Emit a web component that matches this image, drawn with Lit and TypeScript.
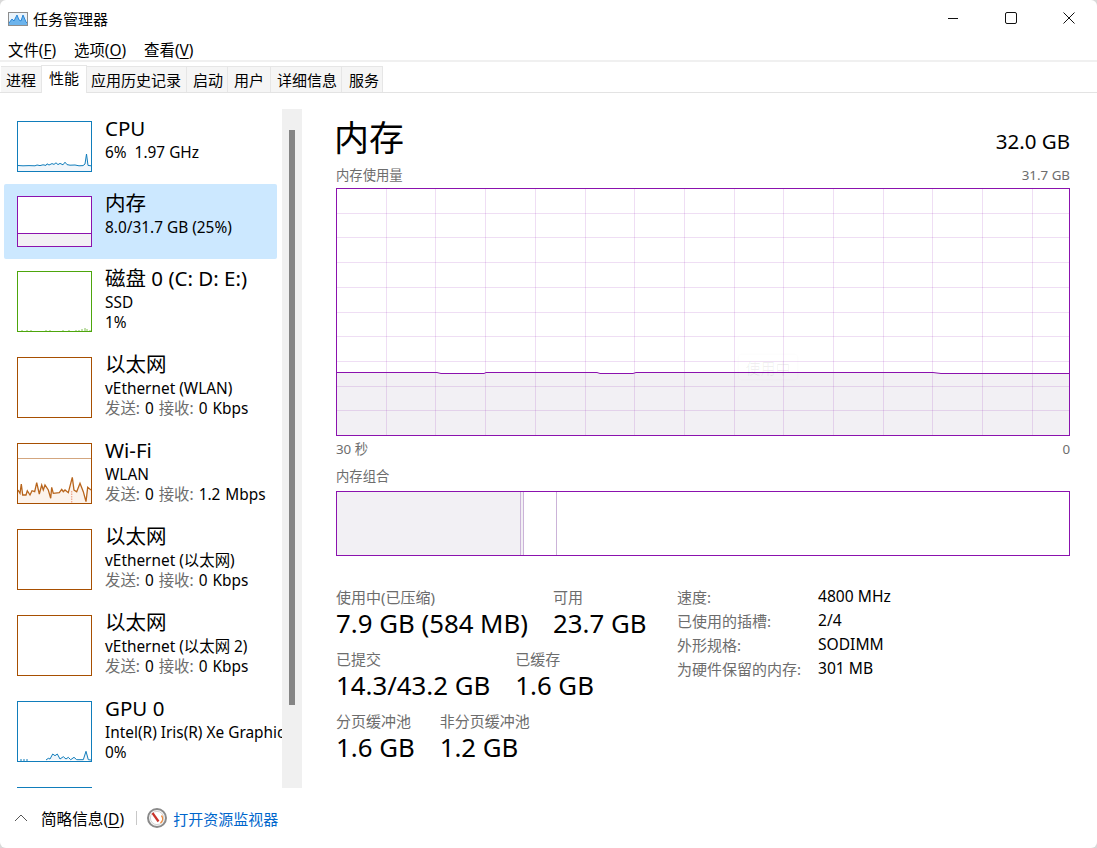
import { LitElement, html, svg, css } from 'lit';
import { customElement } from 'lit/decorators.js';

type Kind = 'cpu' | 'mem' | 'disk' | 'net';

interface Item {
  kind: Kind;
  title: string;
  lines: string[];
  rate?: string;
  tall: boolean;
  chart?: 'cpu' | 'mem' | 'disk' | 'wifi' | 'gpu';
}

const ITEMS: Item[] = [
  { kind: 'cpu', title: 'CPU', lines: ['6%\u00a0 1.97 GHz'], tall: false, chart: 'cpu' },
  { kind: 'mem', title: '内存', lines: ['8.0/31.7 GB (25%)'], tall: false, chart: 'mem' },
  { kind: 'disk', title: '磁盘 0 (C: D: E:)', lines: ['SSD', '1%'], tall: true, chart: 'disk' },
  { kind: 'net', title: '以太网', lines: ['vEthernet (WLAN)'], rate: '0 Kbps', tall: true },
  { kind: 'net', title: 'Wi-Fi', lines: ['WLAN'], rate: '1.2 Mbps', tall: true, chart: 'wifi' },
  { kind: 'net', title: '以太网', lines: ['vEthernet (以太网)'], rate: '0 Kbps', tall: true },
  { kind: 'net', title: '以太网', lines: ['vEthernet (以太网 2)'], rate: '0 Kbps', tall: true },
  { kind: 'cpu', title: 'GPU 0', lines: ['Intel(R) Iris(R) Xe Graphics', '0%'], tall: true, chart: 'gpu' },
  { kind: 'cpu', title: 'GPU 1', lines: [], tall: true },
];

const WIFI =
  '1,47 3,50.3 4.3,41 5.7,52 9,52 10.3,47.7 13,52 15,47.7 17.7,48.7 19.7,39.7 22.3,51 24.7,42 26.3,47 28,42 31.3,47 33.7,55.3 34.7,44.3 36.3,50.3 42.3,49.7 44.7,46.3 46.3,48.7 48,47 51.3,49.7 55.3,34.3 57,47 59.7,48.7 63,40.3 66.3,48.7 69,58.7 70.7,44.3 74,47';
const CPU =
  '1,44.5 6,44.8 12,44.6 18,44.8 20,44 23,44.6 26,43.8 29,44.4 30,42.8 32,44 35,42.6 37,43.4 39,41.8 41,43.6 43,42.4 46,43.8 48,41.2 50,43.6 53,44.2 58,44 62,44.8 66,44.6 68,43 69.5,33 71,44.4 74,44.8';
const GPU =
  '29,59 31.3,57.3 33,58 35.7,53 38,54.7 40.3,53 43,58 46.3,55.7 49,58 51.3,56.3 53.7,58.7 57,56.3 59.7,58.7 66.3,58.7 69,50.3 71.3,58.7 74,59';

const MEM_LINE =
  '0,183.5 100,183.5 104,184.5 147,184.5 149,183.5 260,183.5 263,184.5 296,184.5 299,183.5 596,183.5 604,184.5 733,184.5';

@customElement('app-root')
export class AppRoot extends LitElement {
  static override styles = css`
    :host {
      display: block;
      width: 1097px;
      height: 848px;
      background: #d9d9d9;
      font-family: 'Noto Sans', 'Noto Sans CJK SC', sans-serif;
      color: #000;
      --purple: #8b12ae;
      --muted: #6d6d6d;
    }
    .window {
      width: 1097px;
      height: 848px;
      background: #fff;
      border-radius: 6px;
      overflow: hidden;
      display: flex;
      flex-direction: column;
      font-size: 15.4px;
    }

    /* title bar */
    .titlebar {
      height: 35px;
      box-sizing: border-box;
      display: flex;
      align-items: center;
      padding: 2px 0 0 8px;
      flex: none;
    }
    .titlebar .app-icon {
      margin-right: 5px;
    }
    .caption {
      font-size: 15px;
    }
    .win-btns {
      margin: -2px -1px 0 auto;
      display: flex;
    }
    .win-btn {
      width: 58px;
      height: 32px;
      display: flex;
      align-items: center;
      justify-content: center;
    }

    /* menu + tabs */
    .menu {
      height: 27px;
      flex: none;
      display: flex;
      align-items: center;
      gap: 18px;
      padding: 4px 0 0 8px;
      box-sizing: border-box;
      border-bottom: 2px solid #f0f0f0;
    }
    u {
      text-underline-offset: 2px;
    }
    .tabs {
      height: 31px;
      flex: none;
      box-sizing: border-box;
      display: flex;
      align-items: flex-end;
      padding-left: 1px;
      border-bottom: 1px solid #e3e3e3;
    }
    .tab {
      height: 26px;
      box-sizing: border-box;
      padding: 0 5px 1px;
      background: #f5f5f5;
      border: 1px solid #e6e6e6;
      border-width: 1px 1px 0 0;
      display: flex;
      align-items: center;
      font-size: 15px;
      white-space: nowrap;
    }
    .tab.active {
      height: 28px;
      margin-bottom: -1px;
      padding: 0 7px 4px;
      background: #fff;
      border-width: 1px 1px 0 1px;
      margin-left: -1px;
    }
    .tab:nth-child(3) {
      padding-left: 4px;
    }
    .tab:nth-child(4) {
      padding-left: 6px;
      padding-right: 4px;
    }
    .tab:nth-child(5) {
      padding-left: 6px;
      padding-right: 6px;
    }
    .tab:nth-child(6) {
      padding-left: 6px;
      padding-right: 4px;
    }
    .tab:nth-child(7) {
      padding-left: 7px;
      padding-right: 3px;
    }

    /* body */
    .body {
      flex: 1;
      min-height: 0;
      display: flex;
    }
    .sidebar {
      width: 302px;
      flex: none;
      box-sizing: border-box;
      padding-top: 16px;
      display: flex;
    }
    .list {
      width: 282px;
      height: 679px;
      overflow: hidden;
      flex: none;
    }
    .track {
      width: 20px;
      height: 679px;
      background: #f0f0f0;
      box-sizing: border-box;
      padding: 21px 7px 0;
      flex: none;
    }
    .thumb-bar {
      height: 575px;
      background: #858585;
    }
    .item {
      height: 86px;
      margin: 0 5px 0 4px;
      padding-left: 13px;
      display: flex;
      gap: 13px;
      box-sizing: border-box;
      border-radius: 2px;
    }
    .item.short {
      height: 75px;
    }
    .item.selected {
      background: #cce8ff;
    }
    .thumb {
      width: 75px;
      height: 61px;
      margin-top: 12px;
      box-sizing: border-box;
      border: 1px solid;
      flex: none;
      background: #fff;
    }
    .short .thumb {
      height: 51px;
    }
    .thumb svg {
      display: block;
      width: 73px;
      height: 100%;
    }
    .thumb.cpu {
      border-color: #117dbb;
    }
    .thumb.mem {
      border-color: var(--purple);
    }
    .thumb.disk {
      border-color: #4da60c;
    }
    .thumb.net {
      border-color: #a74f01;
    }
    .info {
      padding-top: 7px;
      white-space: nowrap;
      min-width: 0;
    }
    .name {
      font-size: 20.5px;
      line-height: 24px;
      margin-bottom: 3px;
    }
    .line {
      line-height: 20px;
    }
    .line.rate {
      word-spacing: 1px;
    }
    .line .dim {
      color: var(--muted);
    }

    /* main panel */
    .main {
      flex: 1;
      min-width: 0;
      box-sizing: border-box;
      padding: 24px 27px 0 34px;
    }
    .head {
      height: 44px;
      display: flex;
      justify-content: space-between;
      align-items: center;
    }
    .head h1 {
      margin: 0 0 2px -2px;
      font-size: 35px;
      font-weight: 400;
      line-height: 44px;
    }
    .total {
      font-size: 20.5px;
      padding-top: 4px;
    }
    .cap {
      height: 18px;
      line-height: 18px;
      font-size: 13.33px;
      color: var(--muted);
      display: flex;
      justify-content: space-between;
    }
    .cap.first {
      margin-top: 5px;
    }
    .cap.axis {
      margin-top: 4px;
    }
    .cap.group {
      margin-top: 9px;
    }
    .chart {
      position: relative;
      margin-top: 4px;
      height: 248px;
      box-sizing: border-box;
      border: 1px solid var(--purple);
    }
    .chart svg {
      display: block;
      width: 732px;
      height: 246px;
    }
    .ghost {
      position: absolute;
      left: 402px;
      top: 166px;
      width: 58px;
      height: 24px;
      display: flex;
      align-items: center;
      justify-content: center;
      font-size: 15px;
      color: rgba(0, 0, 0, 0.06);
      box-shadow: 0 0 3px rgba(0, 0, 0, 0.03);
      border-radius: 2px;
    }
    .compose {
      margin-top: 6px;
      height: 65px;
      box-sizing: border-box;
      border: 1px solid var(--purple);
      display: flex;
    }
    .compose .used {
      width: 183px;
      background: #f2f0f4;
      border-right: 1px solid #cbb3d8;
    }
    .compose .seg {
      border-right: 1px solid #cbb3d8;
    }
    .compose .seg.a {
      width: 2px;
      background: #f2f0f4;
    }
    .compose .seg.b {
      width: 32px;
    }
    .stats {
      display: flex;
      margin-top: 28px;
    }
    .stat-col {
      width: 341px;
      flex: none;
      padding-top: 4px;
    }
    .stat-row {
      display: flex;
      gap: 25px;
      margin-bottom: 11px;
    }
    .stat .k {
      font-size: 15px;
      line-height: 18px;
      color: var(--muted);
    }
    .stat .v {
      font-size: 25.8px;
      line-height: 32px;
      margin-top: 1px;
      white-space: nowrap;
    }
    .spec {
      display: grid;
      grid-template-columns: 141px auto;
      grid-auto-rows: 24px;
      align-items: center;
      font-size: 15.6px;
    }
    .spec .k {
      color: var(--muted);
      font-size: 15px;
    }

    /* footer */
    .footer {
      height: 60px;
      flex: none;
      display: flex;
      align-items: center;
      padding-left: 14px;
      font-size: 15px;
    }
    .footer .less {
      margin-left: 13px;
      font-size: 15.6px;
    }
    .footer .sep {
      width: 1px;
      height: 14px;
      background: #c8c8c8;
      margin: 0 10px 0 12px;
    }
    .footer .link {
      color: #0066cc;
      margin-left: 6px;
    }
  `;

  private _thumbArt(item: Item) {
    const h = item.tall ? 59 : 49;
    const box = `1 1 73 ${h}`;
    let art = svg``;
    if (item.chart === 'cpu') {
      art = svg`
        <polygon points="${CPU} 74,50 1,50" fill="#f1f6fb"></polygon>
        <polyline points="${CPU}" fill="none" stroke="#117dbb" stroke-width="1"></polyline>`;
    } else if (item.chart === 'mem') {
      art = svg`
        <rect x="1" y="37" width="73" height="13" fill="#f2f0f4"></rect>
        <rect x="1" y="37" width="73" height="1" fill="#8b12ae"></rect>`;
    } else if (item.chart === 'disk') {
      art = svg`<path d="M5 60v-1M10 60v-1M14 60v-1M29 60v-1M33 60v-1M46 60v-1M52 60v-1M59 60v-1M62 60v-1M65 60v-2M68 60v-3M70 60v-2M73 60v-1" stroke="#4da60c" stroke-opacity="0.7" stroke-width="1"></path>`;
    } else if (item.chart === 'wifi') {
      art = svg`
        <polygon points="${WIFI} 74,60 1,60" fill="#fcf3ec"></polygon>
        <rect x="1" y="15" width="73" height="1" fill="#d3a67f"></rect>
        <path d="M54.7 48V60" stroke="#f0a58a" stroke-width="1.2" stroke-dasharray="1.5 1"></path>
        <polyline points="${WIFI}" fill="none" stroke="#b8651c" stroke-width="1.3"></polyline>`;
    } else if (item.chart === 'gpu') {
      art = svg`
        <polygon points="${GPU}" fill="#f1f6fb"></polygon>
        <path d="M3 59h2M6 59h2M9 59h2" stroke="#117dbb" stroke-width="1"></path>
        <polyline points="${GPU}" fill="none" stroke="#117dbb" stroke-width="1"></polyline>`;
    }
    return html`<svg viewBox=${box} preserveAspectRatio="none">${art}</svg>`;
  }

  private _renderItem(item: Item, i: number) {
    return html`
      <div class="item ${item.tall ? '' : 'short'} ${i === 1 ? 'selected' : ''}">
        <div class="thumb ${item.kind}">${this._thumbArt(item)}</div>
        <div class="info">
          <div class="name">${item.title}</div>
          ${item.lines.map((l) => html`<div class="line">${l}</div>`)}
          ${item.rate
            ? html`<div class="line rate"><span class="dim">发送:</span> 0 <span class="dim">接收:</span> ${item.rate}</div>`
            : ''}
        </div>
      </div>
    `;
  }

  private _chart() {
    const vx = Array.from({ length: 14 }, (_, k) => Math.round(49.7 + k * 49.7) - 0.5);
    const hy = Array.from({ length: 9 }, (_, k) => Math.round(24.7 + k * 24.7) - 0.5);
    return html`
      <svg viewBox="0 0 732 246">
        <polygon points="${MEM_LINE} 733,246 0,246" fill="#f2f0f4"></polygon>
        ${vx.map((x) => svg`<line x1=${x} x2=${x} y1="0" y2="246" stroke="#8b12ae" stroke-opacity="0.14"></line>`)}
        ${hy.map((y) => svg`<line x1="0" x2="732" y1=${y} y2=${y} stroke="#8b12ae" stroke-opacity="0.14"></line>`)}
        <polyline points="${MEM_LINE}" fill="none" stroke="#8b12ae" stroke-width="1"></polyline>
      </svg>
    `;
  }

  override render() {
    return html`
      <div class="window">
        <div class="titlebar">
          <svg class="app-icon" width="20" height="16" viewBox="0 0 20 16">
            <rect x="0.5" y="1.5" width="19" height="13" fill="#e9f3fb" stroke="#8d8d8d"></rect>
            <path d="M1 12 4 8 6 10 9 4 11 9 13 10 15 4 18 11 19 12V14H1Z" fill="#6db4ec"></path>
            <path d="M1 12 4 8 6 10 9 4 11 9 13 10 15 4 18 11 19 12" fill="none" stroke="#2a86d6"></path>
          </svg>
          <span class="caption">任务管理器</span>
          <div class="win-btns">
            <div class="win-btn">
              <svg width="12" height="12" viewBox="0 0 12 12"><path d="M1 6.5h10" stroke="#111"></path></svg>
            </div>
            <div class="win-btn">
              <svg width="12" height="12" viewBox="0 0 12 12"><rect x="0.5" y="0.5" width="11" height="11" rx="1.5" fill="none" stroke="#111"></rect></svg>
            </div>
            <div class="win-btn">
              <svg width="12" height="12" viewBox="0 0 12 12"><path d="M0.5 0.5 11.5 11.5M11.5 0.5 0.5 11.5" stroke="#111"></path></svg>
            </div>
          </div>
        </div>

        <div class="menu">
          <span>文件(<u>F</u>)</span>
          <span>选项(<u>O</u>)</span>
          <span>查看(<u>V</u>)</span>
        </div>

        <div class="tabs">
          ${['进程', '性能', '应用历史记录', '启动', '用户', '详细信息', '服务'].map(
            (t, i) => html`<div class="tab ${i === 1 ? 'active' : ''}">${t}</div>`,
          )}
        </div>

        <div class="body">
          <div class="sidebar">
            <div class="list">${ITEMS.map((it, i) => this._renderItem(it, i))}</div>
            <div class="track"><div class="thumb-bar"></div></div>
          </div>

          <div class="main">
            <div class="head">
              <h1>内存</h1>
              <div class="total">32.0 GB</div>
            </div>
            <div class="cap first"><span>内存使用量</span><span>31.7 GB</span></div>
            <div class="chart">
              ${this._chart()}
              <div class="ghost">使用中</div>
            </div>
            <div class="cap axis"><span>30 秒</span><span>0</span></div>
            <div class="cap group"><span>内存组合</span></div>
            <div class="compose">
              <div class="used"></div>
              <div class="seg a"></div>
              <div class="seg b"></div>
            </div>

            <div class="stats">
              <div class="stat-col">
                <div class="stat-row">
                  <div class="stat"><div class="k">使用中(已压缩)</div><div class="v">7.9 GB (584 MB)</div></div>
                  <div class="stat"><div class="k">可用</div><div class="v">23.7 GB</div></div>
                </div>
                <div class="stat-row">
                  <div class="stat"><div class="k">已提交</div><div class="v">14.3/43.2 GB</div></div>
                  <div class="stat"><div class="k">已缓存</div><div class="v">1.6 GB</div></div>
                </div>
                <div class="stat-row">
                  <div class="stat"><div class="k">分页缓冲池</div><div class="v">1.6 GB</div></div>
                  <div class="stat"><div class="k">非分页缓冲池</div><div class="v">1.2 GB</div></div>
                </div>
              </div>
              <div class="spec">
                <span class="k">速度:</span><span>4800 MHz</span>
                <span class="k">已使用的插槽:</span><span>2/4</span>
                <span class="k">外形规格:</span><span>SODIMM</span>
                <span class="k">为硬件保留的内存:</span><span>301 MB</span>
              </div>
            </div>
          </div>
        </div>

        <div class="footer">
          <svg width="14" height="14" viewBox="0 0 14 14"><path d="M1 10 7 4 13 10" fill="none" stroke="#555"></path></svg>
          <span class="less">简略信息(<u>D</u>)</span>
          <span class="sep"></span>
          <svg width="20" height="20" viewBox="0 0 20 20">
            <circle cx="10" cy="10" r="9" fill="#f4f4f4" stroke="#8a8a8a" stroke-width="2"></circle>
            <circle cx="10" cy="10" r="6.6" fill="#fff" stroke="#c9c9c9" stroke-width="0.8"></circle>
            <path d="M14.5 7.5A5.5 5.5 0 0 1 13.5 15" fill="none" stroke="#f08a3c" stroke-width="1.4"></path>
            <path d="M5.5 5 11.5 13.5" stroke="#c8322a" stroke-width="2.2"></path>
          </svg>
          <span class="link">打开资源监视器</span>
        </div>
      </div>
    `;
  }
}
